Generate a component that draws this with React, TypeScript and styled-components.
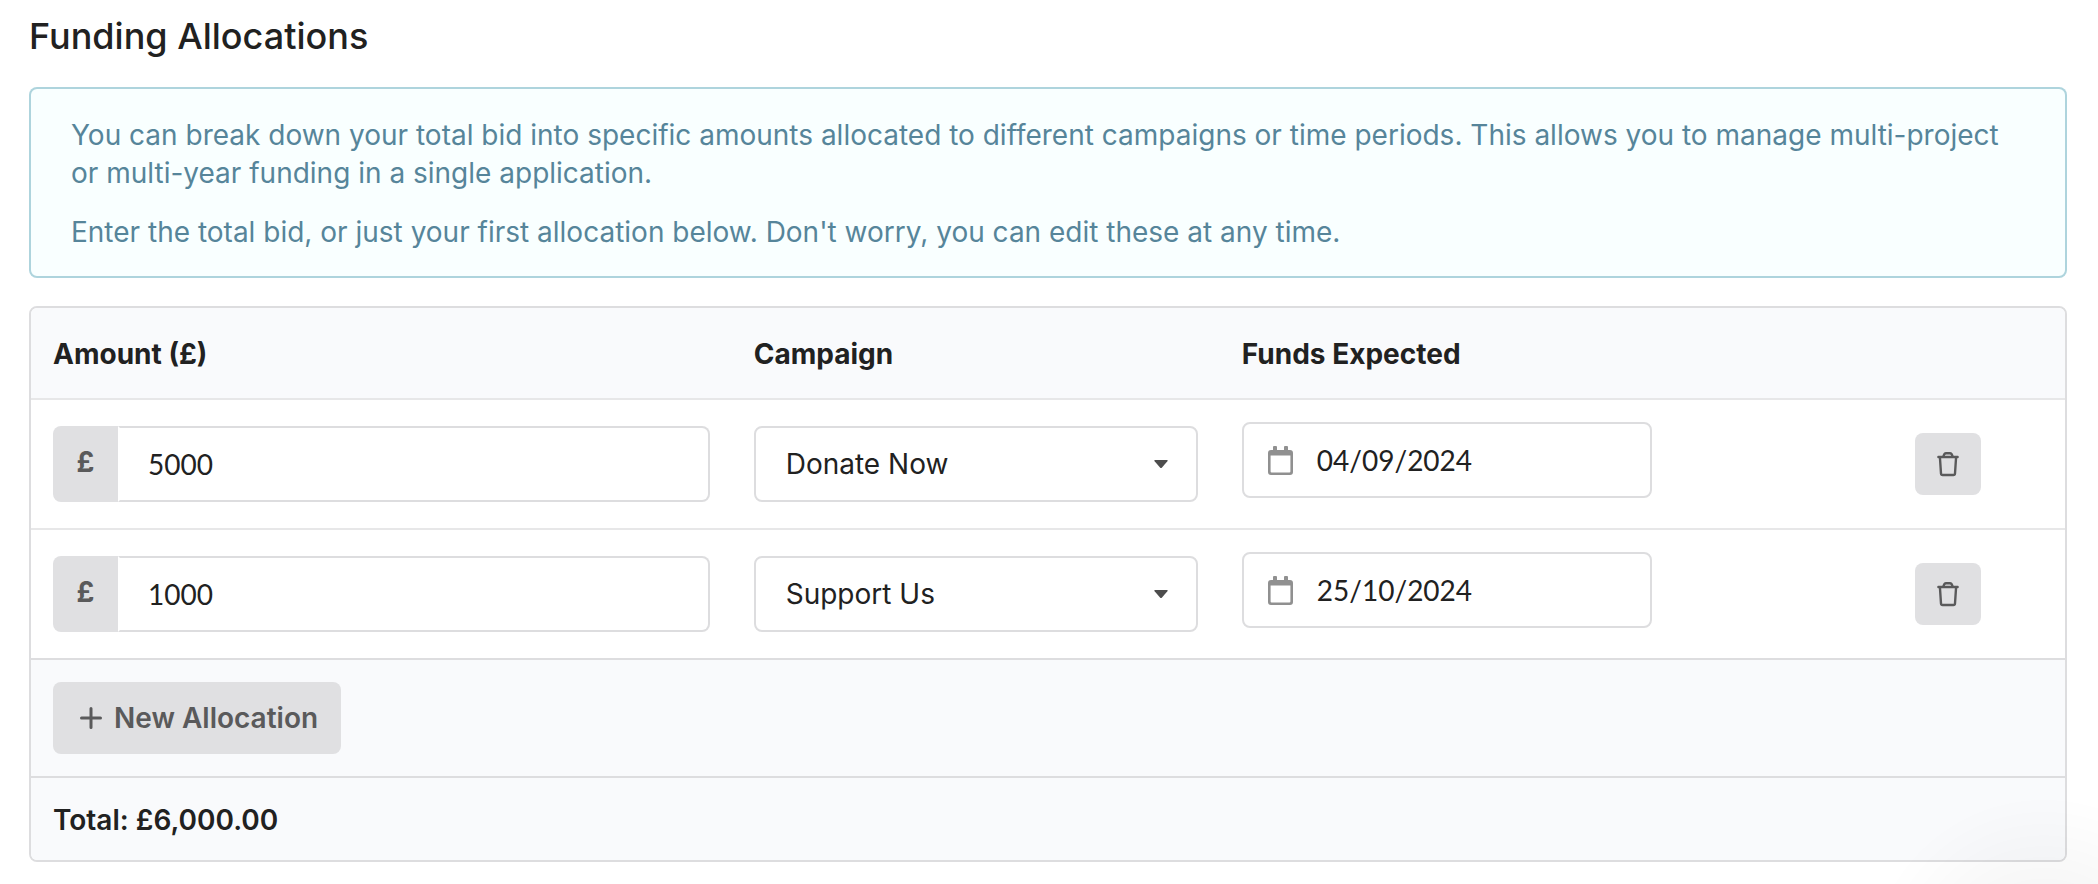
import React, { useState } from "react";
import styled, { createGlobalStyle } from "styled-components";

const sans = `Inter, "Liberation Sans", sans-serif`;
const inputFont = `Lato, "Liberation Sans", sans-serif`;
const ink = "#212121";
const muted = "#5a5a5b";
const line = "#dddddf";
const faintLine = "#e7e7e8";
const panel = "#f9fafc";
const grey = "#e0e0e2";

const GlobalStyle = createGlobalStyle`
  *, *::before, *::after { box-sizing: border-box; }
  body {
    margin: 0;
    background: #fff;
    color: ${ink};
    font-family: ${sans};
    font-size: 28px;
    line-height: 38px;
    -webkit-font-smoothing: antialiased;
  }
`;

const Page = styled.main`
  padding: 14px 31px 22px 29px;
`;

const Heading = styled.h1`
  margin: 0 0 29px;
  font-size: 36px;
  line-height: 44px;
  font-weight: 500;
`;

const Message = styled.section`
  margin-bottom: 28px;
  padding: 29px 42px 27px;
  border-radius: 8px;
  background: #f9ffff;
  box-shadow: inset 0 0 0 2px #aed4dd;
  color: #56859a;

  p { margin: 0; }
  p + p { margin-top: 21px; }
`;

const Table = styled.table`
  width: 100%;
  table-layout: fixed;
  border-collapse: separate;
  border-spacing: 0;
  border: 2px solid ${line};
  border-radius: 8px;
  overflow: hidden;
  text-align: left;
`;

const Col = styled.col<{ $width?: string }>`
  width: ${(p) => p.$width ?? "auto"};
`;

const HeadCell = styled.th`
  height: 92px;
  padding: 2px 22px 0;
  background: ${panel};
  border-bottom: 2px solid ${faintLine};
  font-weight: 700;
`;

const BodyRow = styled.tr`
  & + & > td { border-top: 2px solid ${faintLine}; }
`;

const Cell = styled.td`
  padding: 22px;
  vertical-align: middle;
`;

const FootCell = styled.td`
  padding: 22px;
  background: ${panel};
  border-top: 2px solid ${line};
`;

const TotalCell = styled(FootCell)`
  padding: 23px 22px 21px;
  font-weight: 600;
`;

const AmountField = styled.div`
  display: flex;
  height: 76px;
`;

const Prefix = styled.label`
  display: flex;
  justify-content: center;
  width: 65px;
  padding-top: 17px;
  border-radius: 8px 0 0 8px;
  background: ${grey};
  color: ${muted};
  font-weight: 700;
`;

const AmountInput = styled.input`
  flex: 1;
  min-width: 0;
  padding: 0 28px;
  border: 2px solid ${line};
  border-left-color: transparent;
  border-radius: 0 8px 8px 0;
  background: #fff;
  color: ${ink};
  font-family: ${inputFont};
  font-size: 28px;
`;

const SelectField = styled.div`
  display: grid;
  align-items: center;

  > * { grid-area: 1 / 1; }
  svg {
    justify-self: end;
    margin-right: 30px;
    pointer-events: none;
  }
`;

const Select = styled.select`
  appearance: none;
  width: 100%;
  height: 76px;
  padding: 0 60px 0 30px;
  border: 2px solid ${line};
  border-radius: 8px;
  background: #fff;
  color: ${ink};
  font-family: ${sans};
  font-size: 28px;
`;

const DateField = styled.label`
  display: flex;
  align-items: center;
  gap: 24px;
  width: 410px;
  max-width: 100%;
  height: 76px;
  margin-bottom: 8px;
  padding: 0 24px;
  border: 2px solid ${line};
  border-radius: 8px;
  background: #fff;

  svg { flex: none; }
`;

const DateInput = styled.input`
  flex: 1;
  min-width: 0;
  padding: 0;
  border: 0;
  outline: 0;
  background: transparent;
  color: ${ink};
  font-family: ${inputFont};
  font-size: 28px;
`;

const Button = styled.button`
  display: flex;
  align-items: center;
  justify-content: center;
  border: 0;
  border-radius: 8px;
  background: ${grey};
  color: ${muted};
  font-family: ${sans};
  font-size: 28px;
  font-weight: 600;
  cursor: pointer;
`;

const DeleteButton = styled(Button)`
  width: 66px;
  height: 62px;
`;

const AddButton = styled(Button)`
  gap: 12px;
  height: 72px;
  padding: 0 23px 0 27px;
`;

const LauncherGlow = styled.div`
  position: fixed;
  right: 0;
  bottom: 0;
  width: 240px;
  height: 100px;
  pointer-events: none;
  background: radial-gradient(circle 180px at 186px 190px, rgba(0, 0, 0, 0.06) 0, rgba(0, 0, 0, 0.03) 50%, rgba(0, 0, 0, 0.01) 80%, transparent 100%);
`;

const CaretIcon = () => (
  <svg width="14" height="8" viewBox="0 0 14 8" aria-hidden="true">
    <path d="M1 0H13Q14.4 0 13.4 1.2L8 7.4Q7 8.4 6 7.4L.6 1.2Q-.4 0 1 0Z" fill="#4d4d4d" />
  </svg>
);

const CalendarIcon = () => (
  <svg width="25" height="29" viewBox="0 0 25 29" aria-hidden="true">
    <path
      fillRule="evenodd"
      fill="#909090"
      d="M6 0H8Q9 0 9 1V4H16V1Q16 0 17 0H19Q20 0 20 1V4H22Q25 4 25 7V26Q25 29 22 29H3Q0 29 0 26V7Q0 4 3 4H5V1Q5 0 6 0ZM2.6 9.4V25.4Q2.6 26.4 3.6 26.4H21.4Q22.4 26.4 22.4 25.4V9.4Z"
    />
  </svg>
);

const TrashIcon = () => (
  <svg width="22" height="26" viewBox="0 0 22 26" fill="none" stroke={muted} strokeWidth="2.4" aria-hidden="true">
    <path d="M1.4 6H20.6" strokeLinecap="round" />
    <path d="M6.4 5.6Q7.2 2.2 9 2.2H13Q14.8 2.2 15.6 5.6" />
    <path d="M2.9 6L4 22.5Q4.1 24 5.6 24H16.4Q17.9 24 18 22.5L19.1 6" />
  </svg>
);

const PlusIcon = () => (
  <svg width="22" height="22" viewBox="0 0 22 22" aria-hidden="true">
    <path d="M11 1.5V20.5M1.5 11H20.5" stroke={muted} strokeWidth="3" strokeLinecap="round" />
  </svg>
);

type Allocation = { id: number; amount: string; campaign: string; date: string };

const campaigns = ["Donate Now", "Support Us"];

const initial: Allocation[] = [
  { id: 1, amount: "5000", campaign: "Donate Now", date: "04/09/2024" },
  { id: 2, amount: "1000", campaign: "Support Us", date: "25/10/2024" },
];

export default function App() {
  const [rows, setRows] = useState(initial);

  const update = (id: number, patch: Partial<Allocation>) =>
    setRows((all) => all.map((r) => (r.id === id ? { ...r, ...patch } : r)));
  const remove = (id: number) => setRows((all) => all.filter((r) => r.id !== id));
  const add = () =>
    setRows((all) => [
      ...all,
      { id: Math.max(0, ...all.map((r) => r.id)) + 1, amount: "", campaign: campaigns[0], date: "" },
    ]);

  const total = rows
    .reduce((sum, r) => sum + (Number(r.amount) || 0), 0)
    .toLocaleString("en-GB", { minimumFractionDigits: 2, maximumFractionDigits: 2 });

  return (
    <>
      <GlobalStyle />
      <Page>
        <Heading>Funding Allocations</Heading>
        <Message>
          <p>
            You can break down your total bid into specific amounts allocated to different campaigns or time
            periods. This allows you to manage multi-project or multi-year funding in a single application.
          </p>
          <p>Enter the total bid, or just your first allocation below. Don't worry, you can edit these at any time.</p>
        </Message>
        <Table>
          <colgroup>
            <Col $width="34.45%" />
            <Col $width="24%" />
            <Col />
            <Col $width="172px" />
          </colgroup>
          <thead>
            <tr>
              <HeadCell scope="col">Amount (£)</HeadCell>
              <HeadCell scope="col">Campaign</HeadCell>
              <HeadCell scope="col">Funds Expected</HeadCell>
              <HeadCell aria-label="Actions" />
            </tr>
          </thead>
          <tbody>
            {rows.map((row) => (
              <BodyRow key={row.id}>
                <Cell>
                  <AmountField>
                    <Prefix htmlFor={`amount-${row.id}`}>£</Prefix>
                    <AmountInput
                      id={`amount-${row.id}`}
                      inputMode="decimal"
                      value={row.amount}
                      onChange={(e) => update(row.id, { amount: e.target.value })}
                    />
                  </AmountField>
                </Cell>
                <Cell>
                  <SelectField>
                    <Select
                      aria-label="Campaign"
                      value={row.campaign}
                      onChange={(e) => update(row.id, { campaign: e.target.value })}
                    >
                      {campaigns.map((c) => (
                        <option key={c}>{c}</option>
                      ))}
                    </Select>
                    <CaretIcon />
                  </SelectField>
                </Cell>
                <Cell>
                  <DateField>
                    <CalendarIcon />
                    <DateInput
                      aria-label="Funds expected"
                      value={row.date}
                      onChange={(e) => update(row.id, { date: e.target.value })}
                    />
                  </DateField>
                </Cell>
                <Cell>
                  <DeleteButton type="button" aria-label="Delete allocation" onClick={() => remove(row.id)}>
                    <TrashIcon />
                  </DeleteButton>
                </Cell>
              </BodyRow>
            ))}
          </tbody>
          <tfoot>
            <tr>
              <FootCell colSpan={4}>
                <AddButton type="button" onClick={add}>
                  <PlusIcon />
                  New Allocation
                </AddButton>
              </FootCell>
            </tr>
            <tr>
              <TotalCell colSpan={4}>Total: £{total}</TotalCell>
            </tr>
          </tfoot>
        </Table>
      </Page>
      <LauncherGlow />
    </>
  );
}
